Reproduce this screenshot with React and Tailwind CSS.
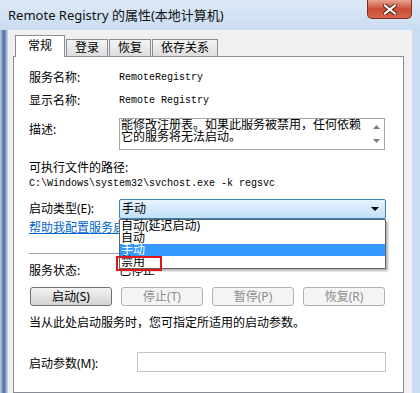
import React from 'react';

const labels = [
  { text: '常规', active: true },
  { text: '登录' },
  { text: '恢复' },
  { text: '依存关系' },
];

const options = ['自动(延迟启动)', '自动', '手动', '禁用'];

const buttons = [
  { text: '启动(S)', enabled: true },
  { text: '停止(T)' },
  { text: '暂停(P)' },
  { text: '恢复(R)' },
];

const CloseButton = () => (
  <div className="mr-[8px] flex h-[19px] w-[45px] items-center justify-center rounded-b-[5px] border border-t-0 border-[#7a2e20] bg-gradient-to-b from-[#e8a493] via-[#c94c33] to-[#d5664d]">
    <svg width="14" height="11" viewBox="0 0 14 11">
      <path d="M2 1.5 L12 9.5 M12 1.5 L2 9.5" stroke="#4a1a10" strokeWidth="4" strokeLinecap="square" />
      <path d="M2 1.5 L12 9.5 M12 1.5 L2 9.5" stroke="#ffffff" strokeWidth="2.2" strokeLinecap="square" />
    </svg>
  </div>
);

const Tab = ({ text, active }) =>
  active ? (
    <div className="relative z-10 -mb-[1px] ml-[2px] flex h-[22px] w-[50px] items-center justify-center border border-b-0 border-[#898c95] bg-white pb-[1px] text-[12px]">
      {text}
    </div>
  ) : (
    <div className="ml-[1px] flex h-[17px] items-center border border-b-0 border-[#898c95] bg-gradient-to-b from-[#f4f4f4] to-[#dddddd] px-[8px] text-[12px]">
      {text}
    </div>
  );

export default function App() {
  return (
    <div className="relative h-[393px] w-[420px] overflow-hidden bg-[#c8dbf1] font-['Noto_Sans','Noto_Sans_CJK_SC',sans-serif] text-[12px] leading-[14px] text-black">
      <div className="flex h-[30px] justify-between bg-gradient-to-b from-[#dde9f7] to-[#c9dcf1]">
        <div className="pl-[8px] pt-[6px] text-[13px] leading-[18px] text-[#111]">Remote Registry 的属性(本地计算机)</div>
        <CloseButton />
      </div>

      <div className="flex h-[363px]">
        <div className="w-[8px] bg-gradient-to-r from-[#b9cfe9] via-[#4d6f9a] to-[#cfe0f3]" />
        <div className="flex flex-1 flex-col bg-[#f0f0f0] pl-[5px] pr-[8px] pt-[5px]">
          <div className="flex h-[21px] items-end">
            {labels.map(t => (
              <Tab key={t.text} {...t} />
            ))}
          </div>

          <div className="flex flex-1 flex-col border border-[#898c95] bg-white pl-[15px] pr-[17px]">
            <div className="mt-[11px] flex h-[20px] items-center">
              <span className="w-[90px]">服务名称:</span>
              <span className="font-['Liberation_Mono',monospace] text-[10px]">RemoteRegistry</span>
            </div>
            <div className="mt-[3px] flex h-[20px] items-center">
              <span className="w-[90px]">显示名称:</span>
              <span className="font-['Liberation_Mono',monospace] text-[10px]">Remote Registry</span>
            </div>
            <div className="mt-[7px] flex h-[32px]">
              <span className="w-[90px] pt-[5px]">描述:</span>
              <div className="flex w-[266px] border border-[#a5a5a5] bg-white">
                <div className="flex-1 overflow-hidden pl-[1px] text-[12px] leading-[12px]">
                  能修改注册表。如果此服务被禁用，任何依赖它的服务将无法启动。
                </div>
                <div className="flex w-[16px] flex-col items-center justify-between py-[6px]">
                  <svg width="7" height="4" viewBox="0 0 7 4"><path d="M0 4 L3.5 0 L7 4 Z" fill="#7d7d7d" /></svg>
                  <svg width="7" height="4" viewBox="0 0 7 4"><path d="M0 0 L3.5 4 L7 0 Z" fill="#7d7d7d" /></svg>
                </div>
              </div>
            </div>

            <div className="mt-[10px] flex h-[16px] items-center">可执行文件的路径:</div>
            <div className="flex h-[16px] items-center font-['Liberation_Mono',monospace] text-[10px]">
              C:\Windows\system32\svchost.exe -k regsvc
            </div>

            <div className="relative z-20 mt-[7px] flex h-[20px] items-center">
              <span className="w-[90px]">启动类型(E):</span>
              <div className="flex h-[20px] w-[267px] items-center justify-between rounded-[2px] border border-[#3c7fb1] bg-gradient-to-b from-[#e6f3fc] to-[#c2e0f8] pl-[2px] pr-[6px]">
                <span>手动</span>
                <svg width="8" height="4" viewBox="0 0 8 4"><path d="M0 0 L8 0 L4 4 Z" fill="#000" /></svg>
              </div>
              <div className="absolute left-[90px] top-[20px] w-[267px] border border-[#646464] bg-white shadow-[2px_2px_2px_rgba(0,0,0,0.3)]">
                {options.map(o => (
                  <div
                    key={o}
                    className={`h-[12px] pl-[1px] text-[12px] leading-[12px] ${o === '手动' ? 'bg-[#3399ff] text-white' : ''}`}
                  >
                    {o}
                  </div>
                ))}
                <div className="absolute -left-[4px] top-[36px] h-[15px] w-[46px] border-2 border-[#e0161c]" />
              </div>
            </div>

            <div className="mt-[2px] flex h-[14px] items-center">
              <span className="text-[#0066cc] underline">帮助我配置服务启动选项。</span>
            </div>

            <div className="mt-[18px] h-[1px] bg-[#a0a0a0]" />

            <div className="mt-[10px] flex h-[14px] items-center">
              <span className="w-[90px]">服务状态:</span>
              <span>已停止</span>
            </div>

            <div className="mt-[9px] flex h-[19px] gap-[9px] pl-[1px]">
              {buttons.map(b => (
                <div
                  key={b.text}
                  className={`flex w-[82px] items-center justify-center rounded-[3px] border ${
                    b.enabled
                      ? 'border-[#707070] bg-gradient-to-b from-[#f2f2f2] to-[#d4d4d4] text-black'
                      : 'border-[#adb2b5] bg-[#f4f4f4] text-[#8d8d8d]'
                  }`}
                >
                  {b.text}
                </div>
              ))}
            </div>

            <div className="mt-[10px] flex h-[14px] items-center">当从此处启动服务时，您可指定所适用的启动参数。</div>

            <div className="mt-[22px] flex h-[20px] items-center">
              <span className="w-[108px] pt-[3px]">启动参数(M):</span>
              <div className="h-[20px] w-[249px] border border-[#c5c5c5] bg-white" />
            </div>
          </div>
        </div>
        <div className="w-[8px] bg-[#c9dcf1]" />
      </div>
    </div>
  );
}
